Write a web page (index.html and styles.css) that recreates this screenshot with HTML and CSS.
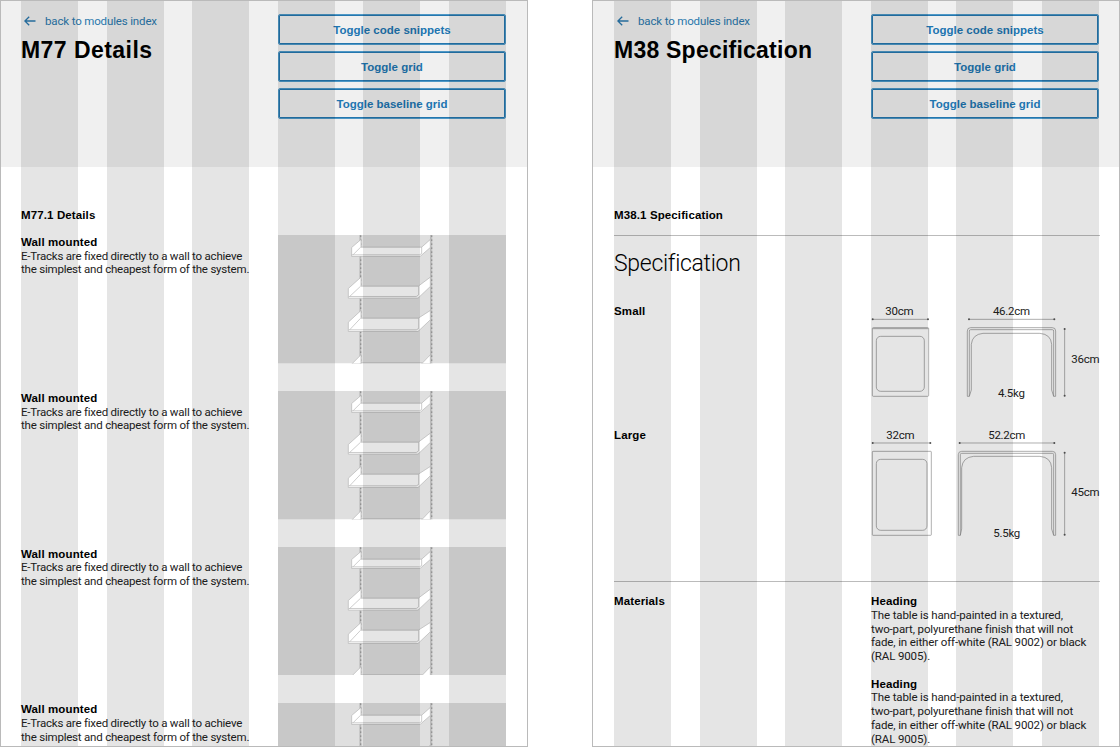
FILE: index.html
```html
<!DOCTYPE html>
<html lang="en">
<head>
<meta charset="utf-8">
<title>Modules</title>
<link rel="stylesheet" href="styles.css">
</head>
<body>
<svg class="defs" aria-hidden="true">
  <defs>
    <symbol id="arrow" viewBox="0 0 12 10"><path d="M11.5 5H1M5.2 .7L.9 5l4.3 4.3" fill="none" stroke="currentColor" stroke-width="1.3"/></symbol>
    <symbol id="shelves" viewBox="0 0 228 128.5">
      <rect width="228" height="128.5" fill="#dfdfdf"/>
      <g transform="translate(62 -5.5) scale(.3333)">
        <path d="M61 16V402M273 16V402" stroke="#b4b4b4" stroke-width="5"/>
        <path d="M64 16V402M277 16V402" stroke="#d6d6d6" stroke-width="3"/>
        <path d="M62 18V402M275 18V402" stroke="#858585" stroke-width="4" stroke-dasharray="4 8"/>
        <g fill="#fff" stroke="#b4b4b4" stroke-width="2">
          <path d="M35 81V54L63 30V53H245L271 30V54L240 81Z"/>
          <path d="M35 76H239L245 72V53M39 76L62 53" fill="none"/>
          <path d="M25 206V177L63 143V170H235L271 143V171L234 206Z"/>
          <path d="M26 201H229L236 196V170M29 201L62 170" fill="none"/>
          <path d="M25 306V278L63 243V266H235L271 243V271L234 306Z"/>
          <path d="M26 301H229L236 297V266M29 301L62 266" fill="none"/>
          <path d="M36 403L63 376V403ZM245 403L271 376V403Z"/>
          <path d="M63 400H247" fill="none"/>
        </g>
      </g>
    </symbol>
  </defs>
</svg>

<section class="pane">
  <header class="masthead">
    <div>
      <a class="back"><svg class="back-icon"><use href="#arrow"/></svg><span class="back-text">back to modules index</span></a>
      <h1 class="title">M77 Details</h1>
    </div>
    <div class="buttons">
      <button class="toggle">Toggle code snippets</button>
      <button class="toggle">Toggle grid</button>
      <button class="toggle">Toggle baseline grid</button>
    </div>
  </header>
  <main class="content">
    <h2 class="label section-label">M77.1 Details</h2>
    <article class="detail"><div class="detail-text"><h3 class="label">Wall mounted</h3><p class="copy">E-Tracks are fixed directly to a wall to achieve<br>the simplest and cheapest form of the system.</p></div><svg class="shelf"><use href="#shelves"/></svg></article>
    <article class="detail"><div class="detail-text"><h3 class="label">Wall mounted</h3><p class="copy">E-Tracks are fixed directly to a wall to achieve<br>the simplest and cheapest form of the system.</p></div><svg class="shelf"><use href="#shelves"/></svg></article>
    <article class="detail"><div class="detail-text"><h3 class="label">Wall mounted</h3><p class="copy">E-Tracks are fixed directly to a wall to achieve<br>the simplest and cheapest form of the system.</p></div><svg class="shelf"><use href="#shelves"/></svg></article>
    <article class="detail"><div class="detail-text"><h3 class="label">Wall mounted</h3><p class="copy">E-Tracks are fixed directly to a wall to achieve<br>the simplest and cheapest form of the system.</p></div><svg class="shelf"><use href="#shelves"/></svg></article>
  </main>
  <div class="overlay"><i class="col"></i><i class="col"></i><i class="col"></i><i class="col"></i><i class="col"></i><i class="col"></i></div>
</section>

<section class="pane pane-spec">
  <header class="masthead">
    <div>
      <a class="back"><svg class="back-icon"><use href="#arrow"/></svg><span class="back-text">back to modules index</span></a>
      <h1 class="title title-spec">M38 Specification</h1>
    </div>
    <div class="buttons">
      <button class="toggle">Toggle code snippets</button>
      <button class="toggle">Toggle grid</button>
      <button class="toggle">Toggle baseline grid</button>
    </div>
  </header>
  <main class="content">
    <h2 class="label section-label">M38.1 Specification</h2>
    <div class="spec">
      <h2 class="spec-title">Specification</h2>
      <div class="spec-row">
        <h3 class="label size-label">Small</h3>
        <svg class="drawing" viewBox="0 0 228 110">
          <g transform="translate(-11 -9) scale(.3333)">
            <g class="line">
              <path d="M38 73H204M326 73H584M614 101V303"/>
              <rect x="37" y="98" width="169" height="206" rx="3"/><path d="M38 101H205"/>
              <rect x="49" y="124" width="144" height="165" rx="13"/>
              <path d="M322 304V108Q322 98 332 98H577Q587 98 587 108V304H581L575 285V148Q573 118 540 115H369Q337 118 334 148V285L328 304ZM328 304V108Q328 104 332 104H577Q581 104 581 108V304"/>
            </g>
            <g class="dot"><circle cx="38" cy="73" r="3"/><circle cx="204" cy="73" r="3"/><circle cx="327" cy="73" r="3"/><circle cx="583" cy="73" r="3"/><circle cx="614" cy="102" r="3"/><circle cx="614" cy="302" r="3"/></g>
            <g class="measure">
              <text x="118" y="60">30cm</text><text x="454" y="60">46.2cm</text><text x="676" y="204">36cm</text><text x="454" y="307">4.5kg</text>
            </g>
          </g>
        </svg>
      </div>
      <div class="spec-row">
        <h3 class="label size-label">Large</h3>
        <svg class="drawing" viewBox="0 0 228 110">
          <g transform="translate(-11 -8) scale(.3333)">
            <g class="line">
              <path d="M38 69H212M298 69H584M614 97V345"/>
              <rect x="37" y="94" width="177" height="252" rx="2"/>
              <rect x="49" y="118" width="152" height="213" rx="13"/>
              <path d="M295 346V104Q295 94 305 94H577Q587 94 587 104V346H581L575 327V143Q573 112 540 109H341Q308 112 305 143V327L301 346ZM301 346V104Q301 100 305 100H577Q581 100 581 104V346"/>
            </g>
            <g class="dot"><circle cx="38" cy="69" r="3"/><circle cx="211" cy="69" r="3"/><circle cx="299" cy="69" r="3"/><circle cx="583" cy="69" r="3"/><circle cx="614" cy="98" r="3"/><circle cx="614" cy="344" r="3"/></g>
            <g class="measure">
              <text x="121" y="56">32cm</text><text x="440" y="56">52.2cm</text><text x="676" y="227">45cm</text><text x="440" y="350">5.5kg</text>
            </g>
          </g>
        </svg>
      </div>
    </div>
    <div class="materials">
      <h3 class="label">Materials</h3>
      <div class="material-list">
        <div><h4 class="label">Heading</h4><p class="copy">The table is hand-painted in a textured,<br>two-part, polyurethane finish that will not<br>fade, in either off-white (RAL 9002) or black<br>(RAL 9005).</p></div>
        <div><h4 class="label">Heading</h4><p class="copy">The table is hand-painted in a textured,<br>two-part, polyurethane finish that will not<br>fade, in either off-white (RAL 9002) or black<br>(RAL 9005).</p></div>
      </div>
    </div>
  </main>
  <div class="overlay"><i class="col"></i><i class="col"></i><i class="col"></i><i class="col"></i><i class="col"></i><i class="col"></i></div>
</section>
</body>
</html>
```
FILE: styles.css
```css
* { box-sizing: border-box; margin: 0; padding: 0; }
body {
  display: flex;
  justify-content: space-between;
  width: 1120px;
  height: 747px;
  overflow: hidden;
  background: #fff;
  font: 11.5px/13.77px Roboto, "Liberation Sans", sans-serif;
  color: #222;
}
.defs { position: absolute; width: 0; height: 0; }
.pane {
  position: relative;
  width: 528px;
  height: 747px;
  overflow: hidden;
  border: 1px solid #bababa;
}
.masthead {
  display: grid;
  grid-template-columns: 228px 228px;
  column-gap: 29px;
  height: 166px;
  padding: 13px 20px 0;
  background: #f0f0f0;
}
.pane-spec .masthead, .pane-spec .content { padding-left: 21px; padding-right: 19px; }
.back {
  display: flex;
  align-items: center;
  gap: 9px;
  height: 14px;
  padding-left: 3px;
  color: #2a78ad;
  letter-spacing: -.15px;
}
.back-icon { width: 12px; height: 10px; }
.back-text { padding-top: 2px; }
.title {
  margin-top: 8px;
  font: bold 23px/28px "Liberation Sans", Arial, sans-serif;
  letter-spacing: .45px;
  color: #000;
  white-space: nowrap;
}
.title-spec { letter-spacing: .23px; }
.buttons { display: flex; flex-direction: column; gap: 6px; }
.toggle {
  height: 31px;
  border: 1px solid #4f98c6;
  box-shadow: inset 0 0 0 1px #2577ae;
  border-radius: 2px;
  background: none;
  color: #2075b0;
  font: bold 11.5px/14px "Liberation Sans", Arial, sans-serif;
  letter-spacing: 0;
}
.content { padding: 41px 20px 0; }
.label {
  font: bold 11.5px/13.77px "Liberation Sans", Arial, sans-serif;
  letter-spacing: .12px;
  color: #000;
}
.section-label { padding-top: .8px; margin-bottom: 12.7px; }
.copy { letter-spacing: -.13px; white-space: nowrap; }
.detail {
  display: grid;
  grid-template-columns: 228px 228px;
  column-gap: 29px;
  margin-bottom: 27.3px;
}
.detail-text { padding-top: .7px; }
.detail-text .copy { letter-spacing: -.21px; }
.shelf { display: block; width: 228px; height: 128.5px; }
.spec { height: 346px; border-top: 1px solid #bbb; }
.spec-title {
  padding: 14px 0 26px;
  font: 300 23px/28px Roboto, sans-serif;
  letter-spacing: -.3px;
  color: #000;
}
.spec-row {
  display: grid;
  grid-template-columns: 228px 228px;
  column-gap: 29px;
  height: 123.5px;
}
.size-label { padding-top: .8px; }
.drawing { width: 228px; height: 110px; overflow: visible; }
.line { fill: none; stroke: #888; stroke-width: 2; }
.dot { fill: #555; }
.measure { font: 34.5px Roboto, sans-serif; letter-spacing: -.8px; fill: #222; text-anchor: middle; }
.materials {
  display: grid;
  grid-template-columns: 228px 228px;
  column-gap: 29px;
  padding-top: 12.8px;
  border-top: 1px solid #bbb;
}
.material-list { display: grid; row-gap: 13.77px; }
.overlay {
  position: absolute;
  inset: 0;
  display: grid;
  grid-template-columns: repeat(6, 57px);
  justify-content: space-between;
  padding: 0 21px 0 20px;
  pointer-events: none;
}
.pane-spec .overlay { padding: 0 20px 0 21px; }
.col { background: rgba(0, 0, 0, .103); }
```
